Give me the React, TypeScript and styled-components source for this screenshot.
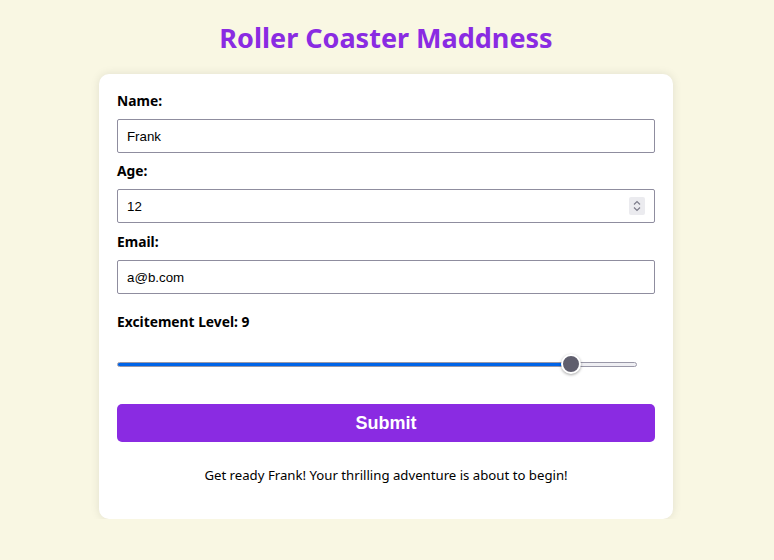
import React, { useState } from "react";
import styled, { createGlobalStyle } from "styled-components";

const Global = createGlobalStyle`
  * { box-sizing: border-box; }
  body {
    margin: 0;
    background: #f9f7e3;
    font-family: "Noto Sans", "Open Sans", sans-serif;
    color: #000;
  }
`;

const Page = styled.div`
  padding: 18px 2px 0 0;
`;

const Title = styled.h1`
  margin: 0 0 16px;
  text-align: center;
  color: #8a2be2;
  font-size: 27px;
  line-height: 40px;
  font-weight: 700;
`;

const Card = styled.form`
  width: 574px;
  margin: 0 auto;
  background: #fff;
  border-radius: 10px;
  padding: 18px 18px 16px;
  box-shadow: 0 0 10px rgba(0, 0, 0, 0.1);
  display: flex;
  flex-direction: column;
`;

const Label = styled.label<{ $gap?: number }>`
  display: block;
  font-weight: 700;
  font-size: 13.8px;
  line-height: 18px;
  margin-top: ${(p) => p.$gap ?? 0}px;
  margin-bottom: 9px;
`;

const InputWrap = styled.div`
  position: relative;
`;

const TextInput = styled.input`
  display: block;
  width: 100%;
  height: 34px;
  border: 1px solid #8f8d9f;
  border-radius: 2px;
  padding: 0 9px;
  font-family: "Liberation Sans", Arial, sans-serif;
  font-size: 13.3px;
  color: #000;
  background: #fff;
  outline: none;
  -moz-appearance: textfield;
  &::-webkit-inner-spin-button,
  &::-webkit-outer-spin-button {
    -webkit-appearance: none;
    margin: 0;
  }
`;

const Spinner = styled.div`
  position: absolute;
  right: 10px;
  top: 8px;
  width: 16px;
  height: 18px;
  background: #ebebef;
  border-radius: 2px;
  display: flex;
  align-items: center;
  justify-content: center;
`;

const Range = styled.input`
  -webkit-appearance: none;
  appearance: none;
  display: block;
  width: 520px;
  height: 20px;
  margin: 14px 0 0;
  background: transparent;
  outline: none;
  &::-webkit-slider-runnable-track {
    height: 5px;
    border-radius: 3px;
    border: 1px solid #9a98a8;
    background: linear-gradient(
      to right,
      #0064e8 0,
      #0064e8 var(--fill),
      #efeff3 var(--fill),
      #efeff3 100%
    );
  }
  &::-webkit-slider-thumb {
    -webkit-appearance: none;
    width: 20px;
    height: 20px;
    margin-top: -8.5px;
    border-radius: 50%;
    background: #5f5e6d;
    border: 2px solid #fff;
    box-shadow: 0 1px 3px rgba(0, 0, 0, 0.35);
  }
`;

const SubmitButton = styled.button`
  margin-top: 30px;
  width: 100%;
  height: 38px;
  border: none;
  border-radius: 5px;
  background: #8a2be2;
  color: #fff;
  font-family: "Liberation Sans", Arial, sans-serif;
  font-weight: 700;
  font-size: 18px;
  cursor: pointer;
`;

const Message = styled.p`
  margin: 24px 0 19px;
  text-align: center;
  font-size: 13.2px;
  line-height: 18px;
`;

export default function App() {
  const [name, setName] = useState("Frank");
  const [age, setAge] = useState("12");
  const [email, setEmail] = useState("a@b.com");
  const [level, setLevel] = useState(9);
  const min = 1;
  const max = 10;
  const pct = ((level - min) / (max - min)) * 100;
  const fillPx = `calc(${pct}% - ${(pct / 100) * 20 - 10}px)`;

  return (
    <>
      <Global />
      <Page>
        <Title>Roller Coaster Maddness</Title>
        <Card onSubmit={(e) => e.preventDefault()}>
          <Label htmlFor="name">Name:</Label>
          <TextInput id="name" value={name} onChange={(e) => setName(e.target.value)} />
          <Label htmlFor="age" $gap={9}>Age:</Label>
          <InputWrap>
            <TextInput id="age" type="number" value={age} onChange={(e) => setAge(e.target.value)} />
            <Spinner>
              <svg width="8" height="12" viewBox="0 0 8 12" fill="none" stroke="#7d7c8a" strokeWidth="1.2">
                <path d="M1 4.5 L4 1.5 L7 4.5" />
                <path d="M1 7.5 L4 10.5 L7 7.5" />
              </svg>
            </Spinner>
          </InputWrap>
          <Label htmlFor="email" $gap={10}>Email:</Label>
          <TextInput id="email" type="email" value={email} onChange={(e) => setEmail(e.target.value)} />
          <Label htmlFor="level" $gap={19}>Excitement Level: {level}</Label>
          <Range
            id="level"
            type="range"
            min={min}
            max={max}
            value={level}
            onChange={(e) => setLevel(Number(e.target.value))}
            style={{ ["--fill" as any]: fillPx }}
          />
          <SubmitButton type="submit">Submit</SubmitButton>
          <Message>Get ready {name}! Your thrilling adventure is about to begin!</Message>
        </Card>
      </Page>
    </>
  );
}
